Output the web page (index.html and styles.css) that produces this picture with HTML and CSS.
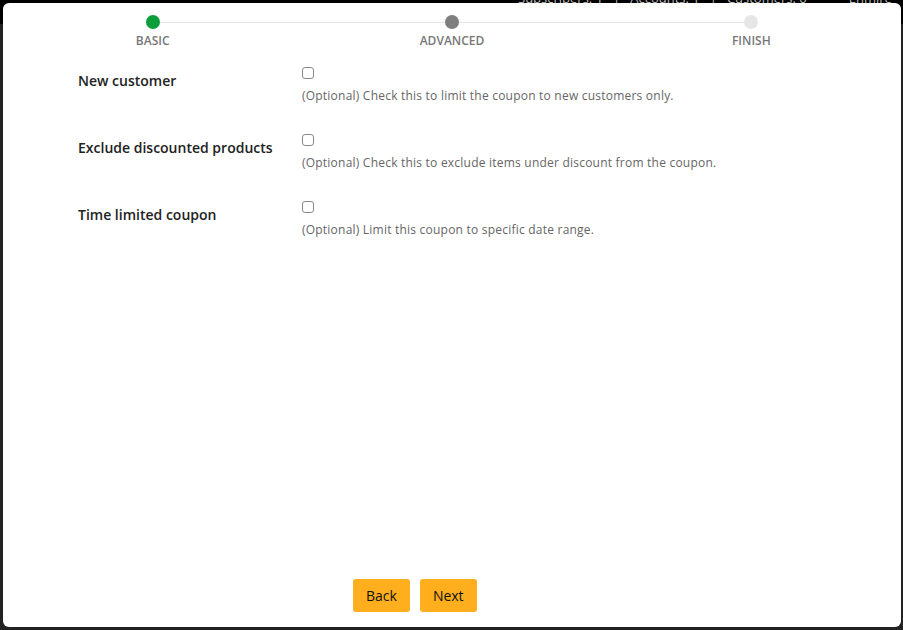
FILE: index.html
```html
<!DOCTYPE html>
<html lang="en">
<head>
<meta charset="utf-8">
<title>Coupon wizard</title>
<link rel="stylesheet" href="styles.css">
</head>
<body>
<div class="topbar">
  <span class="topbar-item">Subscribers: 1</span><span class="sep">|</span>
  <span class="topbar-item">Accounts: 1</span><span class="sep">|</span>
  <span class="topbar-item">Customers: 0</span>
  <span class="topbar-item company">Enmire</span>
</div>
<div class="modal">
  <div class="stepper">
    <div class="step done"><span class="dot"></span><span class="step-label">BASIC</span></div>
    <div class="step current"><span class="dot"></span><span class="step-label">ADVANCED</span></div>
    <div class="step todo"><span class="dot"></span><span class="step-label">FINISH</span></div>
  </div>
  <div class="form">
    <div class="row">
      <label class="label" for="c1">New customer</label>
      <div class="field">
        <input id="c1" class="check" type="checkbox">
        <p class="help">(Optional) Check this to limit the coupon to new customers only.</p>
      </div>
    </div>
    <div class="row">
      <label class="label" for="c2">Exclude discounted products</label>
      <div class="field">
        <input id="c2" class="check" type="checkbox">
        <p class="help">(Optional) Check this to exclude items under discount from the coupon.</p>
      </div>
    </div>
    <div class="row">
      <label class="label" for="c3">Time limited coupon</label>
      <div class="field">
        <input id="c3" class="check" type="checkbox">
        <p class="help">(Optional) Limit this coupon to specific date range.</p>
      </div>
    </div>
  </div>
  <div class="footer">
    <button class="btn" type="button">Back</button>
    <button class="btn" type="button">Next</button>
  </div>
</div>
</body>
</html>
```

FILE: styles.css
```css
* { box-sizing: border-box; }
html, body { height: 100%; }
body {
  margin: 0;
  height: 630px;
  overflow: hidden;
  background: linear-gradient(#000 0, #000 24px, #222 24px, #222 100%);
  font-family: "Open Sans", "Liberation Sans", sans-serif;
  color: #222;
}
.topbar {
  height: 3px;
  overflow: hidden;
  display: flex;
  align-items: flex-start;
  padding-left: 518px;
  white-space: nowrap;
  font-size: 13px;
  line-height: 12px;
  color: #bdbdbd;
}
.topbar > span {
  display: block;
  margin-top: -8px;
}
.sep { margin: 0 10px; }
.company { margin-left: 42px; }
.modal {
  margin: 0 2px 0 3px;
  height: 624px;
  background: #fff;
  border-radius: 6px;
  display: flex;
  flex-direction: column;
}
.stepper {
  position: relative;
  display: grid;
  grid-template-columns: repeat(3, 1fr);
  padding-top: 12px;
}
.stepper::before {
  content: "";
  position: absolute;
  top: 19px;
  left: 16.667%;
  right: 16.667%;
  height: 1px;
  background: #e3e3e3;
}
.step {
  position: relative;
  display: flex;
  flex-direction: column;
  align-items: center;
}
.dot {
  width: 14px;
  height: 14px;
  border-radius: 50%;
  background: #e6e6e6;
}
.done .dot { background: #0c9d3b; }
.current .dot { background: #7f7f7f; }
.step-label {
  margin-top: 4px;
  font-size: 12px;
  font-weight: 600;
  color: #777;
  line-height: 16px;
}
.form {
  flex: 1;
  padding: 18px 0 0 75px;
  display: flex;
  flex-direction: column;
  gap: 30px;
}
.row {
  display: grid;
  grid-template-columns: 224px 1fr;
  align-items: start;
}
.label {
  font-size: 14px;
  font-weight: 600;
  color: #222;
  line-height: 20px;
  padding-top: 4px;
}
.field {
  display: flex;
  flex-direction: column;
}
.check {
  appearance: none;
  -webkit-appearance: none;
  margin: 0;
  width: 12px;
  height: 12px;
  border: 1px solid #8a8a8a;
  border-radius: 3px;
  background: #fff;
}
.help {
  margin: 9px 0 0;
  font-size: 12px;
  line-height: 16px;
  color: #666;
  letter-spacing: 0.22px;
}
.footer {
  display: flex;
  gap: 10px;
  padding: 0 0 15px 350px;
}
.btn {
  height: 33px;
  padding: 0 13px;
  border: none;
  border-radius: 3px;
  background: #ffae1e;
  color: #111;
  font-family: inherit;
  font-size: 14px;
}
```
